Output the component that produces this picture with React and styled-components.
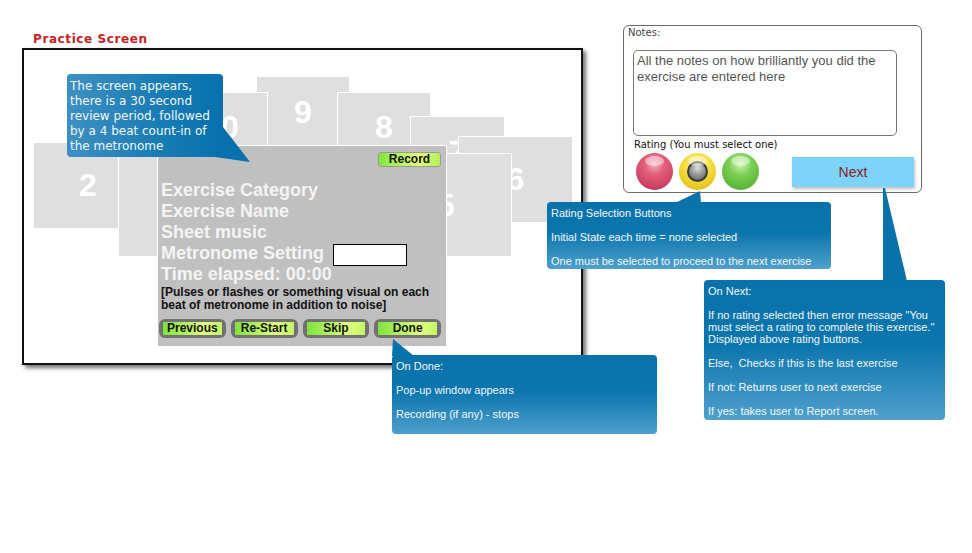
import styled, { createGlobalStyle } from 'styled-components';

const GlobalStyle = createGlobalStyle`
  * { box-sizing: border-box; }
  body {
    margin: 0;
    background: #fff;
    font-family: "Liberation Sans", Arial, sans-serif;
  }
`;

const Page = styled.div`
  position: relative;
  width: 972px;
  height: 553px;
  display: flex;
  align-items: flex-start;
  overflow: hidden;
`;

const LeftCol = styled.div`
  margin: 31px 0 0 22px;
  width: 561px;
`;

const Title = styled.div`
  height: 17px;
  line-height: 17px;
  padding-left: 11px;
  font-family: "DejaVu Sans", sans-serif;
  font-size: 12px;
  font-weight: bold;
  letter-spacing: 0.6px;
  color: #c9221c;
`;

const Frame = styled.div`
  position: relative;
  height: 317px;
  border: 2px solid #111;
  background: #fff;
  box-shadow: 3px 3px 4px rgba(0, 0, 0, 0.55);
  padding: 95px 0 0 133px;
`;

// stacked exercise cards, given in page coordinates (frame content starts at 24,50)
const Card = styled.div`
  position: absolute;
  left: ${(p) => p.$x - 24}px;
  top: ${(p) => p.$y - 50}px;
  width: ${(p) => p.$w}px;
  height: ${(p) => p.$h}px;
  background: #dfdfdf;
  border: 1px solid #fff;
  display: flex;
  align-items: center;
  justify-content: center;
  font: bold 32px "Liberation Sans", Arial, sans-serif;
  color: #fff;
`;

const Panel = styled.div`
  position: relative;
  z-index: 5;
  width: 290px;
  height: 202px;
  background: #c0c0c0;
  border: 1px solid #fff;
  padding: 6px 5px 8px 1px;
  display: flex;
  flex-direction: column;
`;

const RecordButton = styled.div`
  align-self: flex-end;
  width: 63px;
  height: 15px;
  border: 1px solid #9a9a9a;
  border-radius: 3px;
  background: linear-gradient(90deg, #80e83c, #e4ff7c 65%, #b4f058);
  font: bold 12px/13px "Liberation Sans", Arial, sans-serif;
  color: #111;
  text-align: center;
`;

const Fields = styled.div`
  margin-top: 13px;
  padding-left: 2px;
`;

const Field = styled.div`
  display: flex;
  align-items: flex-start;
  height: 21px;
  font: bold 18px/21px "Liberation Sans", Arial, sans-serif;
  color: #f4f4f4;
  white-space: nowrap;
`;

const MetronomeBox = styled.div`
  width: 74px;
  height: 22px;
  margin: 1px 0 0 9px;
  background: #fff;
  border: 1px solid #000;
`;

const Hint = styled.div`
  margin-top: 1px;
  font: bold 12px/13px "Liberation Sans", Arial, sans-serif;
  color: #111;
`;

const ButtonRow = styled.div`
  margin-top: auto;
  display: flex;
  gap: 5px;
`;

const ActionButton = styled.div`
  width: 67px;
  height: 19px;
  padding: 3px 4px;
  border-radius: 6px;
  background: #717171;
  span {
    display: block;
    height: 13px;
    background: linear-gradient(90deg, #7ee23c, #e2ff7e 70%, #c4f466);
    font: bold 12px/13px "Liberation Sans", Arial, sans-serif;
    color: #111;
    text-align: center;
  }
`;

const NotesPanel = styled.div`
  margin: 25px 0 0 40px;
  width: 299px;
  height: 168px;
  border: 1.5px solid #6a6a6a;
  border-radius: 6px;
  padding: 0 7px 0 4px;
`;

const SketchLabel = styled.div`
  font-family: "DejaVu Sans", sans-serif;
  font-size: ${(p) => p.$size || 10}px;
  line-height: 13px;
  color: ${(p) => p.$color || '#444'};
  margin-left: ${(p) => p.$indent || 0}px;
  margin-top: ${(p) => p.$top || 0}px;
`;

const NotesBox = styled.div`
  margin: 11px 0 0 5px;
  width: 264px;
  height: 86px;
  border: 1.2px solid #777;
  border-radius: 5px;
  padding: 2px 3px;
  font: 13px/16px "Liberation Sans", Arial, sans-serif;
  color: #555;
`;

const RatingRow = styled.div`
  margin-top: 2px;
  display: flex;
  align-items: center;
  justify-content: space-between;
`;

const Balls = styled.div`
  display: flex;
  gap: 6px;
  margin-left: 8px;
`;

const ballColors = {
  red: 'radial-gradient(circle at 50% 30%, #f7b3c0 0%, #e3607c 32%, #cf4264 70%, #a92c4a 100%)',
  green: 'radial-gradient(circle at 50% 30%, #d2f4ae 0%, #7ed058 35%, #5cba38 72%, #3f9a22 100%)',
  yellow: 'radial-gradient(circle at 50% 32%, #fff4a0 0%, #f4dc3a 45%, #e2c21c 80%, #c9a710 100%)',
};

const Ball = styled.div`
  position: relative;
  width: 37px;
  height: 37px;
  border-radius: 50%;
  background: ${(p) => ballColors[p.$color]};
  display: flex;
  align-items: center;
  justify-content: center;
  &::after {
    content: '';
    position: absolute;
    left: 9px;
    top: 3px;
    width: 19px;
    height: 10px;
    border-radius: 50%;
    background: rgba(255, 255, 255, 0.45);
  }
`;

const InnerBall = styled.div`
  width: 21px;
  height: 21px;
  border-radius: 50%;
  border: 2px solid #3a3a3a;
  background: radial-gradient(circle at 50% 30%, #e0e0e0 0%, #9a9a9a 45%, #5a5a5a 100%);
`;

const NextButton = styled.div`
  width: 122px;
  height: 30px;
  background: #7dd4f8;
  box-shadow: 1px 2px 3px rgba(0, 0, 0, 0.25);
  font: 14px/30px "Liberation Sans", Arial, sans-serif;
  color: #8b1c1c;
  text-align: center;
`;

const Callout = styled.div`
  position: absolute;
  z-index: 20;
  left: ${(p) => p.$x}px;
  top: ${(p) => p.$y}px;
  width: ${(p) => p.$w}px;
  height: ${(p) => p.$h}px;
  border-radius: 4px;
  background: linear-gradient(180deg, #0a72ab 0%, #0b75ae 46%, #4fa0cc 100%);
  color: #f3f8fc;
  font: 11px/12px "Liberation Sans", Arial, sans-serif;
  padding: 5px 4px;
  p {
    margin: 0 0 12px;
    white-space: nowrap;
  }
  p:last-child {
    margin-bottom: 0;
  }
`;

const IntroCallout = styled(Callout)`
  background: linear-gradient(90deg, #3e90c3 0%, #1a7db5 55%, #0671ac 100%);
  font: 12px/15px "DejaVu Sans", sans-serif;
  padding: 5px 3px;
  white-space: nowrap;
`;

const Tail = styled.svg`
  position: absolute;
  left: 0;
  top: 0;
  width: 1px;
  height: 1px;
  overflow: visible;
`;

const cards = [
  { n: '9', x: 256, y: 76, w: 94, h: 72 },
  { n: '0', x: 192, y: 92, w: 76, h: 70 },
  { n: '8', x: 337, y: 92, w: 94, h: 70 },
  { n: '7', x: 410, y: 116, w: 95, h: 72 },
  { n: '6', x: 458, y: 136, w: 115, h: 87 },
  { n: '5', x: 380, y: 153, w: 132, h: 104 },
  { n: '2', x: 33, y: 142, w: 110, h: 87 },
  { n: '', x: 118, y: 142, w: 112, h: 115 },
];

const fields = ['Exercise Category', 'Exercise Name', 'Sheet music'];

export default function App() {
  return (
    <Page>
      <GlobalStyle />
      <LeftCol>
        <Title>Practice Screen</Title>
        <Frame>
          {cards.map((c) => (
            <Card key={c.x} $x={c.x} $y={c.y} $w={c.w} $h={c.h}>{c.n}</Card>
          ))}
          <Panel>
            <RecordButton>Record</RecordButton>
            <Fields>
              {fields.map((f) => <Field key={f}>{f}</Field>)}
              <Field>Metronome Setting<MetronomeBox /></Field>
              <Field>Time elapsed: 00:00</Field>
              <Hint>
                [Pulses or flashes or something visual on each<br />
                beat of metronome in addition to noise]
              </Hint>
            </Fields>
            <ButtonRow>
              <ActionButton><span>Previous</span></ActionButton>
              <ActionButton><span>Re-Start</span></ActionButton>
              <ActionButton><span>Skip</span></ActionButton>
              <ActionButton><span>Done</span></ActionButton>
            </ButtonRow>
          </Panel>
        </Frame>
      </LeftCol>

      <NotesPanel>
        <SketchLabel>Notes:</SketchLabel>
        <NotesBox>
          All the notes on how brilliantly you did the<br />
          exercise are entered here
        </NotesBox>
        <SketchLabel $color="#111" $indent={6} $top={2}>Rating (You must select one)</SketchLabel>
        <RatingRow>
          <Balls>
            <Ball $color="red" />
            <Ball $color="yellow"><InnerBall /></Ball>
            <Ball $color="green" />
          </Balls>
          <NextButton>Next</NextButton>
        </RatingRow>
      </NotesPanel>

      <IntroCallout $x={67} $y={74} $w={156} $h={83}>
        <Tail><polygon points="148,83 156,53 183,88" fill="#0671ac" /></Tail>
        The screen appears,<br />
        there is a 30 second<br />
        review period, followed<br />
        by a 4 beat count-in of<br />
        the metronome
      </IntroCallout>

      <Callout $x={547} $y={202} $w={284} $h={67}>
        <Tail><polygon points="128,1 153,-11 154,1" fill="#0a72ab" /></Tail>
        <p>Rating Selection Buttons</p>
        <p>Initial State each time = none selected</p>
        <p>One must be selected to proceed to the next exercise</p>
      </Callout>

      <Callout $x={392} $y={355} $w={265} $h={79}>
        <Tail><polygon points="0,1 1,-16 22,1" fill="#0a72ab" /></Tail>
        <p>On Done:</p>
        <p>Pop-up window appears</p>
        <p>Recording (if any) - stops</p>
      </Callout>

      <Callout $x={704} $y={280} $w={241} $h={140}>
        <Tail><polygon points="179,1 179,-92 181,-92 203,1" fill="#0a72ab" /></Tail>
        <p>On Next:</p>
        <p>
          If no rating selected then error message "You<br />
          must select a rating to complete this exercise."<br />
          Displayed above rating buttons.
        </p>
        <p>Else,&nbsp; Checks if this is the last exercise</p>
        <p>If not: Returns user to next exercise</p>
        <p>If yes: takes user to Report screen.</p>
      </Callout>
    </Page>
  );
}
